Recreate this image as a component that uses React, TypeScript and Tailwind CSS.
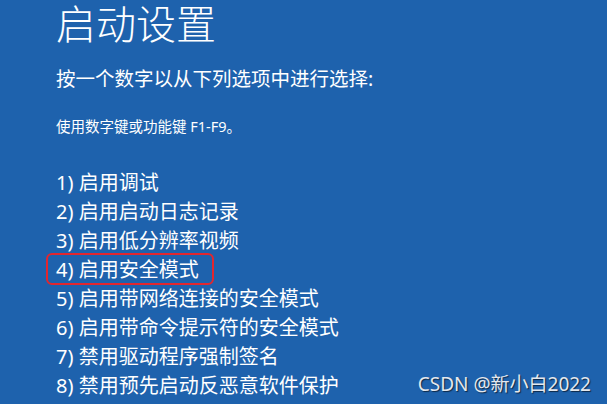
const items = [
  '1) 启用调试',
  '2) 启用启动日志记录',
  '3) 启用低分辨率视频',
  '4) 启用安全模式',
  '5) 启用带网络连接的安全模式',
  '6) 启用带命令提示符的安全模式',
  '7) 禁用驱动程序强制签名',
  '8) 禁用预先启动反恶意软件保护',
];

export default function App() {
  return (
    <div
      className="relative w-[607px] h-[404px] overflow-hidden bg-[#1e62ad] text-white pl-[56px]"
      style={{ fontFamily: '"Noto Sans", "Noto Sans CJK SC", sans-serif' }}
    >
      <h1 className="pt-[4px] text-[40px] leading-[40px] font-light">启动设置</h1>
      <p className="mt-[21px] text-[19.5px] leading-[28px]">按一个数字以从下列选项中进行选择:</p>
      <p className="mt-[23px] text-[14.5px] leading-[20px]">使用数字键或功能键 F1-F9。</p>

      <ul className="mt-[32px] flex flex-col">
        {items.map((item, i) => (
          <li key={item} className="relative text-[20px] leading-[29px]">
            {i === 3 && (
              <span className="absolute -left-[10px] -top-[2px] w-[168px] h-[32px] rounded-[6px] border-2 border-[#e3262e]" />
            )}
            {item}
          </li>
        ))}
      </ul>

      <div className="absolute right-[16px] bottom-[8px] text-[19px] leading-[24px] text-[#e4e8ee] [text-shadow:1px_1px_1px_rgba(0,0,0,0.6)]">
        CSDN @新小白2022
      </div>
    </div>
  );
}
